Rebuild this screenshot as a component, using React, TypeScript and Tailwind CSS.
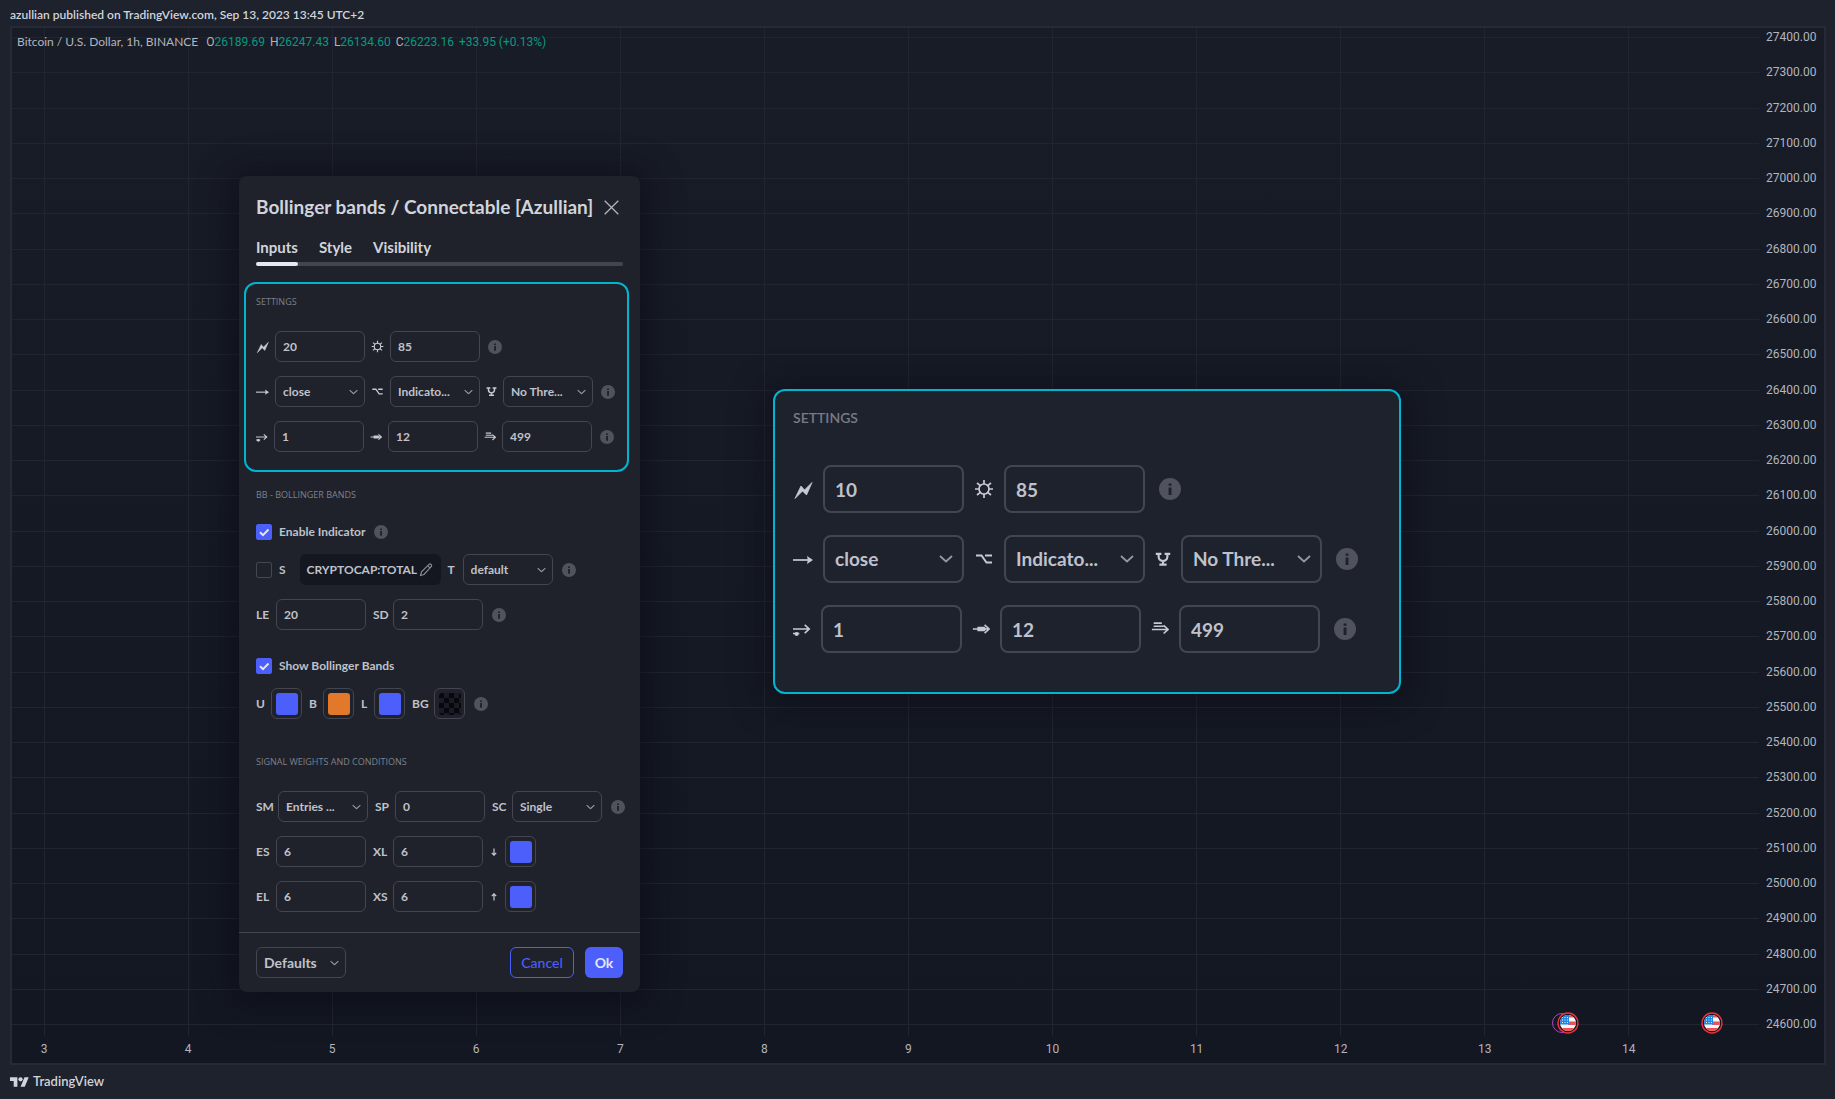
import type { ReactNode } from "react";
import clsx from "clsx";

const PRICES = Array.from({ length: 29 }, (_, i) => `${27400 - i * 100}.00`);
const DAYS = Array.from({ length: 12 }, (_, i) => i + 3);

type Size = "sm" | "lg";
type GlyphName = "bolt" | "sun" | "arrow" | "option" | "fork" | "over" | "fat" | "triple" | "down" | "up";

const GLYPHS: Record<GlyphName, ReactNode> = {
  bolt: <path d="M2 19.500 8 7l3.500 4L19 3.500 13.500 16 9.500 12z" fill="currentColor" stroke="currentColor" strokeWidth=".8" />,
  sun: (
    <g fill="none" stroke="currentColor" strokeWidth="1.700">
      <circle cx="10" cy="10" r="5" />
      <path d="M10 1v4M10 15v4M1 10h4M15 10h4M3 4l3.300 2.700M17 4l-3.300 2.700M3 16l3.300-2.700M17 16l-3.300-2.700" />
    </g>
  ),
  arrow: (
    <>
      <path d="M0 11h17" fill="none" stroke="currentColor" strokeWidth="1.700" />
      <path d="M14 7 20 11l-6 4 .8-4z" fill="currentColor" />
    </>
  ),
  option: <path d="M2 6.500h5.500l5 7H18M11 6.500h7" fill="none" stroke="currentColor" strokeWidth="2" />,
  fork: (
    <path
      d="M1 3.500h7M12 3.500h7M4.500 3.500V7a5.500 5.500 0 0 0 11 0V3.500M10 12.500V17M5.500 17h9"
      fill="none"
      stroke="currentColor"
      strokeWidth="2.700"
    />
  ),
  over: (
    <>
      <path d="M0 10h17M13 5.500l5 4.500-5 4.500M0 15h7" fill="none" stroke="currentColor" strokeWidth="1.800" />
      <circle cx="4" cy="15.500" r="2.300" fill="currentColor" />
    </>
  ),
  fat: (
    <>
      <path d="M1 10h18M14 5.500l5 4.500-5 4.500" fill="none" stroke="currentColor" strokeWidth="1.800" />
      <path d="M6 7.500h8l2 2.500-2 2.500H6z" fill="currentColor" />
    </>
  ),
  triple: (
    <path d="M3 3.500h9M3 7h11M1 10.500h17M14 6l5 4.500-5 4.500" fill="none" stroke="currentColor" strokeWidth="1.800" />
  ),
  down: <path d="M10 1v17M4.500 12l5.500 6 5.500-6" fill="none" stroke="currentColor" strokeWidth="3" />,
  up: <path d="M10 19V2M4.500 8 10 2l5.500 6" fill="none" stroke="currentColor" strokeWidth="3" />,
};

function Glyph({ name, className }: { name: GlyphName; className: string }) {
  return (
    <svg viewBox="0 0 20 20" className={clsx("shrink-0 text-[#c8cad3]", className)} aria-hidden="true">
      {GLYPHS[name]}
    </svg>
  );
}

function Info({ size = "sm" }: { size?: Size }) {
  return (
    <button
      type="button"
      aria-label="More information"
      className={clsx("shrink-0", size === "sm" ? "ml-[2px] size-[14px]" : "ml-1 size-[22px]")}
    >
      <svg viewBox="0 0 22 22" className="size-full" aria-hidden="true">
        <circle cx="11" cy="11" r="11" fill="#50535e" />
        <path d="M9.600 5.500h2.900v2.300H9.600zM9.600 9.500h2.900V17H9.600z" fill="#1e222d" />
      </svg>
    </button>
  );
}

function Chevron({ className }: { className: string }) {
  return (
    <svg viewBox="0 0 14 8" className={clsx("pointer-events-none absolute top-1/2 -translate-y-1/2", className)} aria-hidden="true">
      <path d="M1 1l6 5.500L13 1" fill="none" stroke="#9598a1" strokeWidth="1.800" />
    </svg>
  );
}

const BOX = {
  sm: "h-[31px] w-[90px] rounded-[6px] border border-[#434651] bg-transparent px-[7px] text-[12px]",
  lg: "h-12 w-[141px] rounded-[8px] border-2 border-[#434651] bg-transparent px-[10px] text-[19px]",
};

function Field({ label, value, size = "sm" }: { label: string; value: string; size?: Size }) {
  return (
    <input
      aria-label={label}
      defaultValue={value}
      className={clsx("shrink-0 font-bold text-[#bfc1cb] outline-none focus:border-[#4c5ffa]", BOX[size])}
    />
  );
}

function Choice({ label, value, size = "sm" }: { label: string; value: string; size?: Size }) {
  return (
    <span className="relative shrink-0">
      <select
        aria-label={label}
        defaultValue={value}
        className={clsx("block appearance-none font-bold text-[#bfc1cb] outline-none focus:border-[#4c5ffa]", BOX[size])}
      >
        <option>{value}</option>
      </select>
      <Chevron className={size === "sm" ? "right-[7px] w-[9px]" : "right-[11px] w-[14px]"} />
    </span>
  );
}

function Swatch({ label, color }: { label: string; color: string }) {
  return (
    <button
      type="button"
      aria-label={label}
      className="flex size-[31px] shrink-0 items-center justify-center rounded-[6px] border border-[#434651]"
    >
      <span className={clsx("size-[22px] rounded-[3px]", color)} />
    </button>
  );
}

function Tag({ children, className }: { children: ReactNode; className: string }) {
  return <span className={clsx("shrink-0 whitespace-nowrap", className)}>{children}</span>;
}

function Check({ label, checked }: { label: string; checked?: boolean }) {
  return (
    <label className="flex items-center gap-[7px]">
      <span className="relative flex size-4">
        <input
          type="checkbox"
          defaultChecked={checked}
          className="peer size-4 appearance-none rounded-[2px] border border-[#434651] checked:border-[#4c5ffa] checked:bg-[#4c5ffa]"
        />
        <svg viewBox="0 0 16 16" className="pointer-events-none absolute inset-0 hidden peer-checked:block" aria-hidden="true">
          <path d="M4 8.200l3 2.900L12.500 5.500" fill="none" stroke="#e4e6f0" strokeWidth="2" />
        </svg>
      </span>
      {label}
    </label>
  );
}

function Row({ children, className }: { children: ReactNode; className?: string }) {
  return <div className={clsx("flex items-center gap-[7px]", className)}>{children}</div>;
}

function Heading({ children, className }: { children: ReactNode; className?: string }) {
  return (
    <h3 className={clsx("font-['Open_Sans',sans-serif] text-[9px] leading-[14px] font-medium text-[#7e818c]", className)}>
      {children}
    </h3>
  );
}

function Settings({ size, length }: { size: Size; length: string }) {
  const sm = size === "sm";
  const wide = sm ? "size-[13px]" : "size-5";
  const narrow = sm ? "size-[11px]" : "size-4";
  const medium = sm ? "size-3" : "size-[18px]";
  const row = clsx("flex items-center", sm ? "gap-[6px]" : "gap-[10px]");
  return (
    <div className={clsx("flex flex-col", sm ? "mt-[22px] gap-[14px]" : "mt-[37px] gap-[22px]")}>
      <div className={row}>
        <Glyph name="bolt" className={wide} />
        <Field label="Length" value={length} size={size} />
        <Glyph name="sun" className={wide} />
        <Field label="Brightness" value="85" size={size} />
        <Info size={size} />
      </div>
      <div className={row}>
        <Glyph name="arrow" className={wide} />
        <Choice label="Source" value="close" size={size} />
        <Glyph name="option" className={wide} />
        <Choice label="Mode" value="Indicato..." size={size} />
        <Glyph name="fork" className={narrow} />
        <Choice label="Threshold" value="No Thre..." size={size} />
        <Info size={size} />
      </div>
      <div className={row}>
        <Glyph name="over" className={medium} />
        <Field label="Start" value="1" size={size} />
        <Glyph name="fat" className={medium} />
        <Field label="Step" value="12" size={size} />
        <Glyph name="triple" className={medium} />
        <Field label="Limit" value="499" size={size} />
        <Info size={size} />
      </div>
    </div>
  );
}

function Dialog() {
  return (
    <section
      aria-label="Indicator settings"
      className="absolute top-[148px] left-[227px] w-[401px] rounded-[8px] bg-[#1f222a] text-[12px] font-bold text-[#bfc1cb] shadow-[0_4px_32px_8px_rgba(10,11,22,0.6)]"
    >
      <header className="px-[17px] pt-[18px]">
        <div className="flex items-center justify-between">
          <h2 className="text-[19px] leading-[26px] font-bold whitespace-nowrap text-[#d1d4dc]">
            Bollinger bands / Connectable [Azullian]
          </h2>
          <button type="button" aria-label="Close" className="flex size-6 items-center justify-center">
            <svg viewBox="0 0 15 15" className="size-[15px]" aria-hidden="true">
              <path d="M.700.700l13.600 13.600M14.300.700.700 14.300" stroke="#b2b5be" strokeWidth="1.300" />
            </svg>
          </button>
        </div>
        <nav className="relative mt-[17px] flex gap-[21px] pb-[9px] text-[15px] leading-5 text-[#d1d4dc]">
          <span className="absolute inset-x-0 bottom-0 h-1 rounded-full bg-[#434651]" />
          <button type="button" className="relative">
            Inputs
            <span className="absolute inset-x-0 -bottom-[9px] h-1 rounded-full bg-[#e6e8ef]" />
          </button>
          <button type="button">Style</button>
          <button type="button">Visibility</button>
        </nav>
      </header>

      <div className="mt-4 mr-[11px] ml-[5px] rounded-[12px] border-2 border-[#00b5d0] px-[10px] pt-[11px] pb-[18px]">
        <Heading>SETTINGS</Heading>
        <Settings size="sm" length="20" />
      </div>

      <div className="px-[17px] pb-5">
        <Heading className="mt-4">BB - BOLLINGER BANDS</Heading>
        <Row className="mt-5 h-5">
          <Check label="Enable Indicator" checked />
          <Info />
        </Row>
        <Row className="mt-3">
          <Check label="S" />
          <button type="button" className="ml-[7px] flex h-[31px] w-[141px] shrink-0 items-center justify-between rounded-[6px] bg-[#141720] pr-2 pl-[7px]">
            CRYPTOCAP:TOTAL
            <svg viewBox="0 0 14 14" className="size-[14px]" aria-hidden="true">
              <path d="M1.500 12.500l1-3.700L10 1.300q1-.8 2 .2t.4 2L5 11.400zM8.700 2.700l2.600 2.600" fill="none" stroke="#8a8d98" strokeWidth="1.100" />
            </svg>
          </button>
          <Tag className="w-2">T</Tag>
          <Choice label="Timeframe" value="default" />
          <Info />
        </Row>
        <Row className="mt-[14px]">
          <Tag className="w-[13px]">LE</Tag>
          <Field label="Length" value="20" />
          <Tag className="w-[13px]">SD</Tag>
          <Field label="Standard deviation" value="2" />
          <Info />
        </Row>
        <Row className="mt-[26px] h-5">
          <Check label="Show Bollinger Bands" checked />
        </Row>
        <Row className="mt-3">
          <Tag className="w-2">U</Tag>
          <Swatch label="Upper colour" color="bg-[#4c5ffa]" />
          <Tag className="w-[7px]">B</Tag>
          <Swatch label="Basis colour" color="bg-[#e2782a]" />
          <Tag className="w-[6px]">L</Tag>
          <Swatch label="Lower colour" color="bg-[#4c5ffa]" />
          <Tag className="w-[15px]">BG</Tag>
          <Swatch
            label="Background colour"
            color="bg-[repeating-conic-gradient(#191c27_0_25%,#07080c_0_50%)] bg-[length:10px_10px]"
          />
          <Info />
        </Row>

        <Heading className="mt-9">SIGNAL WEIGHTS AND CONDITIONS</Heading>
        <Row className="mt-[22px]">
          <Tag className="w-[15px]">SM</Tag>
          <Choice label="Signal mode" value="Entries ..." />
          <Tag className="w-[13px]">SP</Tag>
          <Field label="Signal period" value="0" />
          <Tag className="w-[13px]">SC</Tag>
          <Choice label="Signal count" value="Single" />
          <Info />
        </Row>
        <Row className="mt-[14px]">
          <Tag className="w-[13px]">ES</Tag>
          <Field label="Enter short" value="6" />
          <Tag className="w-[13px]">XL</Tag>
          <Field label="Exit long" value="6" />
          <Glyph name="down" className="size-2" />
          <Swatch label="Down colour" color="bg-[#4c5ffa]" />
        </Row>
        <Row className="mt-[14px]">
          <Tag className="w-[13px]">EL</Tag>
          <Field label="Enter long" value="6" />
          <Tag className="w-[13px]">XS</Tag>
          <Field label="Exit short" value="6" />
          <Glyph name="up" className="size-2" />
          <Swatch label="Up colour" color="bg-[#4c5ffa]" />
        </Row>
      </div>

      <footer className="flex items-center border-t border-[#434651] px-[17px] py-[14px] text-[14px]">
        <button type="button" className="relative h-[31px] w-[90px] rounded-[6px] border border-[#434651] pl-[7px] text-left">
          Defaults
          <Chevron className="right-[6px] w-[9px]" />
        </button>
        <button type="button" className="ml-auto h-[31px] w-16 rounded-[6px] border border-[#4c5ffa] font-medium text-[#4c5ffa]">
          Cancel
        </button>
        <button type="button" className="ml-[11px] h-[31px] w-[38px] rounded-[6px] bg-[#4c5ffa] text-[#e4e6f5]">
          Ok
        </button>
      </footer>
    </section>
  );
}

function FlagBadge({ className }: { className?: string }) {
  return (
    <svg viewBox="0 0 22 22" className={clsx("size-[22px]", className)} aria-hidden="true">
      <clipPath id="flag-disc">
        <circle cx="11" cy="11" r="8" />
      </clipPath>
      <circle cx="11" cy="11" r="10" fill="#131722" stroke="#ef3340" strokeWidth="1.400" />
      <g clipPath="url(#flag-disc)">
        <path d="M3 3h16v16H3z" fill="#f5f6fa" />
        <path d="M3 3h16v2.500H3zM11 9.500h8V13h-8zM3 16h16v3H3z" fill="#ef5350" />
        <path d="M3 3h9v9.500H3z" fill="#1e88e5" />
        <path d="M5 5.500h6M5 8h6M5 10.500h6" stroke="#e8f0fc" strokeWidth="1" strokeDasharray="1 1.500" />
      </g>
    </svg>
  );
}

function Quote({ name, value }: { name: string; value: string }) {
  return (
    <span>
      {name}
      <span className="text-[#089981]">{value}</span>
    </span>
  );
}

export default function App() {
  return (
    <div className="flex min-h-screen flex-col bg-[#1e222d] font-[Lato,sans-serif] text-[#d1d4dc]">
      <p className="px-[10px] pt-[7px] pb-[3px] text-[12px] leading-4 font-semibold">
        azullian published on TradingView.com, Sep 13, 2023 13:45 UTC+2
      </p>

      <main className="relative mr-[9px] ml-[10px] flex grow flex-col border-2 border-[#272a36] bg-linear-to-b from-[#181c27] to-[#131722]">
        <div className="flex grow">
          <div className="relative grow">
            <div className="absolute inset-0 flex flex-col justify-between pt-[9px] pb-[11px]">
              {PRICES.map((p) => (
                <span key={p} className="h-px bg-[#222530]" />
              ))}
            </div>
            <div className="absolute inset-0 flex justify-between pr-[130px] pl-8">
              {DAYS.map((d) => (
                <span key={d} className="w-px bg-[#222530]" />
              ))}
            </div>
            <div className="relative flex gap-[5px] px-[5px] pt-1 font-[Roboto,sans-serif] text-[12px] leading-5 text-[#b2b5be]">
              <span className="pr-[3px] font-[Lato,sans-serif]">Bitcoin / U.S. Dollar, 1h, BINANCE</span>
              <Quote name="O" value="26189.69" />
              <Quote name="H" value="26247.43" />
              <Quote name="L" value="26134.60" />
              <Quote name="C" value="26223.16" />
              <span className="text-[#089981]">+33.95 (+0.13%)</span>
            </div>
            <div className="absolute right-[36px] bottom-[2px]">
              <FlagBadge />
            </div>
            <div className="absolute right-[180px] bottom-[2px]">
              <span className="absolute top-px -left-[5px] size-5 rounded-full border border-[#ab47bc]" />
              <FlagBadge className="relative" />
            </div>
          </div>
          <ul className="flex w-[65px] flex-col justify-between pt-[3px] pb-[5px] pl-[7px] font-[Roboto,sans-serif] text-[12px] text-[#b2b5be]">
            {PRICES.map((p) => (
              <li key={p} className="h-[13px] leading-[13px]">
                {p}
              </li>
            ))}
          </ul>
        </div>
        <ul className="flex justify-between pr-[187px] pl-[24px] text-center font-[Roboto,sans-serif] text-[12px] leading-[27px] text-[#b2b5be]">
          {DAYS.map((d) => (
            <li key={d} className="w-4">
              {d}
            </li>
          ))}
        </ul>

        <Dialog />

        <section
          aria-label="Enlarged settings"
          className="absolute top-[361px] left-[761px] w-[628px] rounded-[12px] border-2 border-[#00b5d0] bg-[#1e222d] px-[18px] pt-[17px] pb-[39px] shadow-[0_4px_32px_8px_rgba(10,11,22,0.5)]"
        >
          <h3 className="text-[14px] leading-5 font-semibold text-[#787b86]">SETTINGS</h3>
          <Settings size="lg" length="10" />
        </section>
      </main>

      <footer className="flex h-[34px] items-center gap-1 px-[10px] text-[13px] font-semibold">
        <svg viewBox="0 0 36 28" className="h-[15px] w-[19px]" fill="#d1d4dc" aria-hidden="true">
          <path d="M14 22H7V11H0V4h14v18zM28 22h-8l7.500-18h8L28 22z" />
          <circle cx="20" cy="8" r="4" />
        </svg>
        <span>TradingView</span>
      </footer>
    </div>
  );
}
